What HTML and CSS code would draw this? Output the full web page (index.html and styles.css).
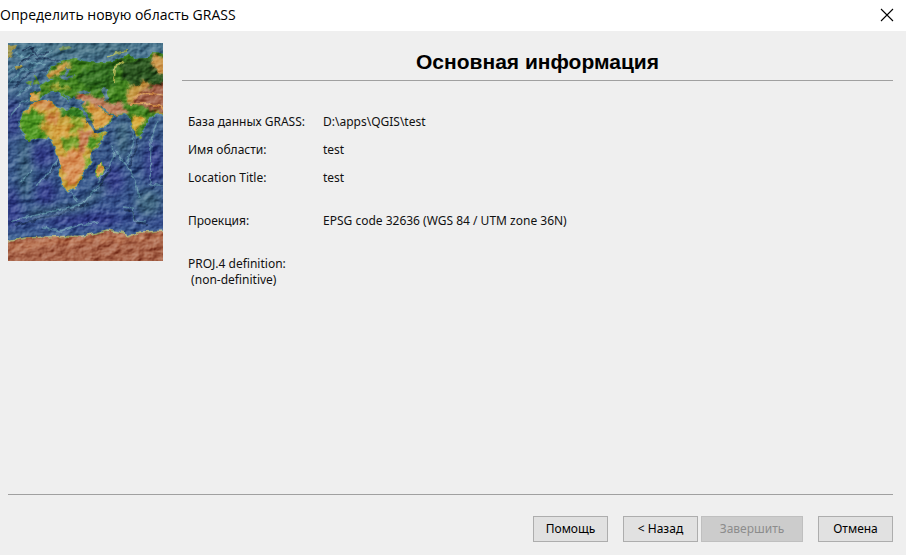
FILE: index.html
```html
<!DOCTYPE html>
<html lang="ru">
<head>
  <meta charset="UTF-8" />
  <meta name="viewport" content="width=device-width, initial-scale=1.0" />
  <title>Определить новую область GRASS</title>
  <link rel="stylesheet" href="styles.css">
</head>
<body>
  <header class="titlebar">
    <span>Определить новую область GRASS</span>
    <button class="close" type="button" aria-label="Закрыть">
      <svg width="14" height="14" viewBox="0 0 14 14"><path d="M1 1l12 12M13 1L1 13" stroke="#000" stroke-width="1.1" /></svg>
    </button>
  </header>

  <main class="wizard">
    <svg class="map" viewBox="0 0 155 218" role="img" aria-label="Карта рельефа" color-interpolation-filters="sRGB">
      <defs>
        <linearGradient id="sea" x1="0" y1="0" x2="0" y2="1">
          <stop offset="0" stop-color="#4c7890" />
          <stop offset="0.22" stop-color="#42688c" />
          <stop offset="0.45" stop-color="#3b5a8c" />
          <stop offset="0.65" stop-color="#39598c" />
          <stop offset="0.82" stop-color="#385090" />
          <stop offset="1" stop-color="#4c7f98" />
        </linearGradient>
        <filter id="relief" x="0" y="0" width="100%" height="100%">
          <feTurbulence type="fractalNoise" baseFrequency="0.09 0.12" numOctaves="4" seed="8" />
          <feColorMatrix values="0 0 0 0 0  0 0 0 0 0  0 0 0 0 0  1 0 0 0 0" />
          <feDiffuseLighting surfaceScale="2" lighting-color="#fff">
            <feDistantLight azimuth="225" elevation="30" />
          </feDiffuseLighting>
        </filter>
        <filter id="rough" x="-5%" y="-5%" width="110%" height="110%">
          <feTurbulence type="fractalNoise" baseFrequency="0.16" numOctaves="2" seed="3" />
          <feDisplacementMap in="SourceGraphic" scale="5" xChannelSelector="R" yChannelSelector="G" />
          <feGaussianBlur stdDeviation="0.4" />
        </filter>
        <filter id="patch" x="-10%" y="-10%" width="120%" height="120%">
          <feTurbulence type="fractalNoise" baseFrequency="0.13" numOctaves="3" seed="5" />
          <feDisplacementMap in="SourceGraphic" scale="13" xChannelSelector="R" yChannelSelector="G" />
          <feGaussianBlur stdDeviation="0.9" />
        </filter>
        <filter id="soft"><feGaussianBlur stdDeviation="5" /></filter>
        <path id="africa" d="M12 79L15 70L24 60L36 57L44 58L47 64L59 67L65 64L74 67L79 78L87 91L99 89L92 100L82 111L83 121L75 129L74 136L69 143L60 148L55 143L51 128L53 120L48 110L46 101L41 96L30 95L21 98L13 88Z" />
        <path id="asia" d="M39 31L43 24L50 20L57 16L67 15L75 18L89 20L105 18L115 15L120 11L127 15L139 14L144 9L160 10V76L149 70L143 73L139 81L134 89L129 95L125 84L122 75L117 71L107 72L101 70L94 64L89 60L97 69L105 73L104 79L87 88L79 74L74 61L76 57L68 56L66 53L62 56L56 50L60 58L49 48L43 48L36 52L31 58L22 57L22 50L34 48L31 42L42 37L46 37L42 35Z" />
        <clipPath id="africa-area"><use href="#africa" /></clipPath>
        <clipPath id="asia-area"><use href="#asia" /></clipPath>
        <clipPath id="frame"><path d="M0 0H155V218H0Z" /></clipPath>
      </defs>

      <g clip-path="url(#frame)">
        <rect width="155" height="218" fill="url(#sea)" />
        <!-- deep basins and shallow shelves -->
        <g filter="url(#soft)" fill="#34338c" opacity="0.65">
          <ellipse cx="5" cy="75" rx="7" ry="20" />
          <ellipse cx="34" cy="112" rx="13" ry="12" />
          <ellipse cx="38" cy="150" rx="10" ry="14" />
          <ellipse cx="5" cy="164" rx="6" ry="22" />
          <ellipse cx="146" cy="120" rx="10" ry="22" />
          <ellipse cx="104" cy="137" rx="13" ry="15" />
          <ellipse cx="76" cy="176" rx="38" ry="6" />
        </g>
        <g filter="url(#soft)" fill="#456f80" opacity="0.75">
          <ellipse cx="17" cy="125" rx="6" ry="35" />
          <ellipse cx="115" cy="95" rx="8" ry="20" />
          <ellipse cx="140" cy="160" rx="14" ry="14" />
          <ellipse cx="82" cy="7" rx="45" ry="8" />
          <path d="M20 166L72 160L98 136L100 144L76 168L20 176Z" />
        </g>
        <g filter="url(#rough)" fill="none" stroke="#6a9fb0" stroke-width="1.5" opacity="0.7">
          <path d="M0 42L14 27L27 24L44 8M0 29L18 15L33 5M2 73L13 60L20 58M7 53L23 42M8 10L24 20L38 22" />
          <path d="M50 117L37 133L28 143M24 127L13 139M3 179L28 171L52 167L75 160L91 143L101 129M102 102L106 112L101 123L90 139" />
          <path d="M123 83L126 98L118 122M149 78L143 97L142 142M142 142H155M108 108L127 135L131 154M63 149L70 158" />
          <path d="M114 164L124 165L127 178L138 179M35 185L52 188L74 182L90 179" />
        </g>
        <g filter="url(#rough)" fill="none" stroke="#1e3459" stroke-width="2" opacity="0.65">
          <path d="M14 8L23 4L30 12L41 10M5 46L22 29L49 27M11 21L26 11M28 15L53 18M37 136L51 120M7 182L54 170L80 160" />
          <path d="M116 167L125 169L129 180L140 181M130 97L121 125M103 125L92 143" />
        </g>

        <g filter="url(#rough)">
          <use href="#africa" fill="none" stroke="#4d8795" stroke-width="2" />
          <use href="#asia" fill="none" stroke="#4d8297" stroke-width="2" />
          <g clip-path="url(#asia-area)">
            <path d="M0 0H160V100H0Z" fill="#42831f" />
            <g filter="url(#patch)">
              <path d="M88 20L111 21L105 43L88 47L70 39L72 29Z" fill="#347022" />
              <path d="M108 18L160 12V40L129 43L117 37Z" fill="#28511e" />
              <path d="M39 32L51 21L66 17L61 23L47 34Z" fill="#d1a453" />
              <path d="M20 49L34 50L31 60L20 60Z" fill="#daa34e" />
              <path d="M35 44L52 42L62 43L62 47L51 47Z" fill="#b2ae3f" />
              <path d="M64 56L72 50L86 52L94 59L117 61L120 72L103 73L90 63L77 60Z" fill="#c08160" />
              <path d="M77 59L91 63L105 75L100 82L87 88Z" fill="#d9a34b" />
              <path d="M116 49L127 41L143 40L145 50L132 54L119 58Z" fill="#c79a45" />
              <path d="M119 60L137 46L165 36V72L145 68L130 62Z" fill="#a5634b" />
              <path d="M143 15L165 12V36L148 31Z" fill="#cf9b50" />
              <path d="M125 73L138 73L131 88L127 94Z" fill="#d9ab3c" />
              <path d="M144 68L160 73V82L149 77Z" fill="#b8a736" />
            </g>
            <path d="M125 55Q138 48 155 53M122 61Q140 58 155 65" fill="none" stroke="#d39757" stroke-width="2" />
            <path d="M106 39L107 24L116 18" fill="none" stroke="#a6ad4b" stroke-width="2" />
          </g>
          <g clip-path="url(#africa-area)">
            <path d="M8 50H105V152H8Z" fill="#c8a13b" />
            <g filter="url(#patch)">
              <path d="M9 72L25 67L37 73L33 85L42 96L22 102L9 91Z" fill="#4e9622" />
              <path d="M48 63L79 67L77 74L56 75Z" fill="#358225" />
              <path d="M53 96L69 92L72 103L60 106L53 103Z" fill="#74a12d" />
              <path d="M26 59L44 58L43 64L25 65L17 71Z" fill="#d08d4c" />
              <path d="M42 69L53 73L47 82L38 76Z" fill="#d08d4c" />
              <path d="M63 72L74 76L77 89L65 90Z" fill="#92aa31" />
              <path d="M76 86L84 92L79 105L72 112L70 98Z" fill="#c57d53" />
              <path d="M52 113L73 107L78 124L70 138L59 144L53 128Z" fill="#d99358" />
              <path d="M81 96L97 90L90 104L81 109Z" fill="#559a27" />
              <path d="M80 112L86 116L73 134L78 121Z" fill="#68a423" />
              <path d="M45 82L61 83L64 91L52 96L45 93Z" fill="#d5a242" />
            </g>
          </g>
          <!-- inland seas, islands -->
          <path d="M93 44L99 45L98 50L101 57L97 58L94 51ZM69 49L77 46L83 50L73 52ZM58 24L62 26L58 33L68 32L57 37L51 35L57 31Z" fill="#4f7789" />
          <path d="M37 52L42 50L49 59L39 57ZM54 54L59 61L47 61Z" fill="#496d8d" />
          <path d="M75 69L79 75L87 88L94 87" fill="none" stroke="#426983" stroke-width="3" />
          <path d="M24 32L28 34L31 40L26 42L27 37ZM20 37L24 37L23 42L19 41Z" fill="#5b8c38" />
          <path d="M7 22L14 22L15 25L8 26ZM0 2L8 1L4 14L0 16Z" fill="#a39a53" />
          <path d="M51 5L61 3L64 5L52 8Z" fill="#71915e" />
          <path d="M100 15L108 10L120 8" fill="none" stroke="#96a65a" stroke-width="2" />
          <path d="M89 123L94 119L96 125L92 135L88 134Z" fill="#d09f47" stroke="#679f30" />
          <circle cx="133" cy="95" r="2" fill="#619336" />
          <path d="M-5 200L17 195L39 194L75 193L88 190L99 187L117 190L119 194L132 189L160 188V225H-5Z" fill="#a9654a" stroke="#a9b07a" stroke-width="1.5" />
        </g>
        <path d="M0 199L28 196L83 196L107 192L126 194L155 190V194L116 199L93 198L52 201L0 210Z" fill="#c98560" opacity="0.5" filter="url(#patch)" />
        <rect class="shade" width="155" height="218" filter="url(#relief)" />
      </g>
    </svg>

    <section class="page">
      <h1>Основная информация</h1>
      <dl class="summary">
        <dt>База данных GRASS:</dt>
        <dd>D:\apps\QGIS\test</dd>
        <dt>Имя области:</dt>
        <dd>test</dd>
        <dt>Location Title:</dt>
        <dd>test</dd>
        <dt class="spaced">Проекция:</dt>
        <dd class="spaced">EPSG code 32636 (WGS 84 / UTM zone 36N)</dd>
        <dt class="spaced">PROJ.4 definition:<br>&nbsp;(non-definitive)</dt>
        <dd class="spaced"></dd>
      </dl>
    </section>
  </main>

  <footer class="buttons">
    <button class="help" type="button">Помощь</button>
    <button type="button">&lt; Назад</button>
    <button class="finish" type="button" disabled>Завершить</button>
    <button class="cancel" type="button">Отмена</button>
  </footer>
</body>
</html>
```
FILE: styles.css
```css
* {
  box-sizing: border-box;
}
body {
  margin: 0;
  min-height: 100vh;
  display: flex;
  flex-direction: column;
  background: #efefef;
  color: #111;
  font-family: Tahoma, "Noto Sans", sans-serif;
  font-size: 12px;
  line-height: 16px;
}

.titlebar {
  display: flex;
  align-items: center;
  justify-content: space-between;
  height: 31px;
  padding: 0 12px 2px 0;
  background: #fff;
  color: #000;
  font-family: "Segoe UI", "Open Sans", sans-serif;
  font-size: 14px;
}
.close {
  display: flex;
  padding: 0;
  border: none;
  background: none;
}

.wizard {
  flex: 1;
  display: flex;
  align-items: flex-start;
  gap: 19px;
  margin: 0 13px 0 8px;
  padding-top: 12px;
  border-bottom: 1px solid #a0a0a0;
}
.map {
  flex: none;
  width: 155px;
  height: 218px;
}
.shade {
  mix-blend-mode: soft-light;
}

.page {
  flex: 1;
}
h1 {
  margin: 0;
  padding: 6px 0;
  border-bottom: 1px solid #a0a0a0;
  color: #000;
  font-family: "Liberation Sans", Arial, sans-serif;
  font-size: 21px;
  line-height: 25px;
  text-align: center;
}
.summary {
  display: grid;
  grid-template-columns: 123px 1fr;
  gap: 12px;
  margin: 33px 0 0;
  padding-left: 6px;
}
.summary dd {
  margin: 0;
}
.summary .spaced {
  margin-top: 15px;
}

.buttons {
  display: flex;
  justify-content: flex-end;
  padding: 21px 13px 13px;
}
.buttons button {
  width: 75px;
  height: 26px;
  padding: 0;
  border: 1px solid #adadad;
  background: #e1e1e1;
  color: #000;
  font: inherit;
}
.buttons .help,
.buttons .finish {
  margin-right: 15px;
}
.buttons .finish {
  width: 102px;
  margin-left: 3px;
  border-color: #bfbfbf;
  background: #ccc;
  color: #8c8c8c;
}
```
